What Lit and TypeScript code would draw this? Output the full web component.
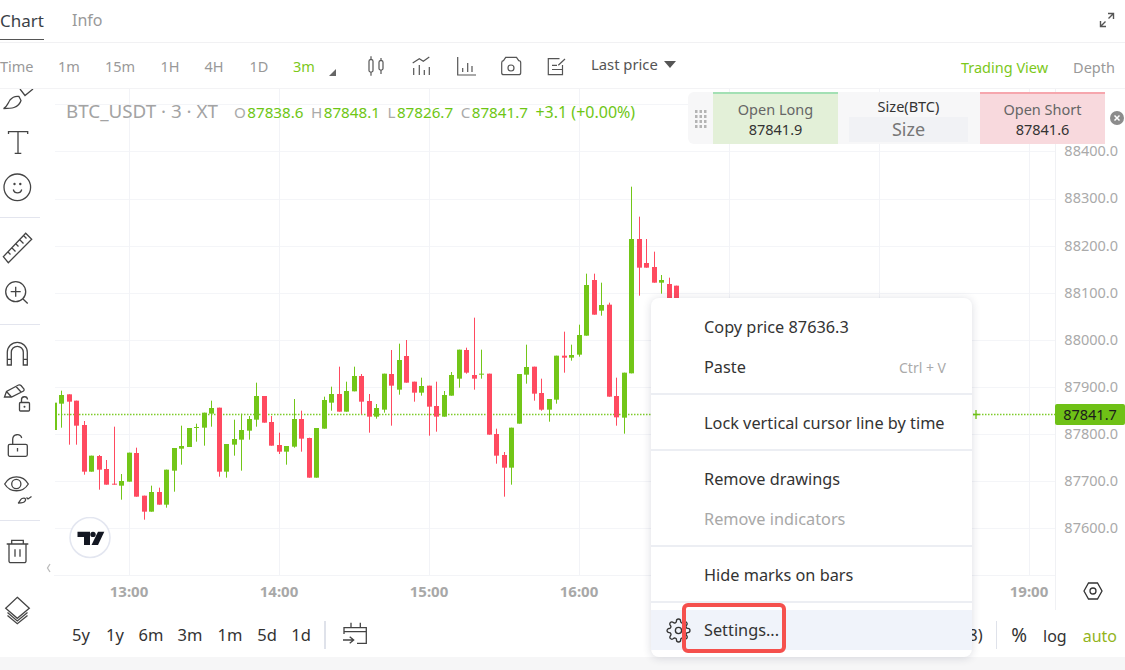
import { LitElement, html, css, svg } from 'lit';
import { customElement } from 'lit/decorators.js';

const RED = '#ff4a60';
const GREEN = '#72c618';

// [up, wickTop, bodyTop, bodyBottom, wickBottom], read off the chart in 3x crop units
const LEFT_CANDLES: number[][] = [
  [1, 188, 188, 270, 270], [1, 152, 165, 191, 263], [0, 163, 163, 185, 314], [0, 182, 182, 257, 314],
  [0, 243, 255, 395, 404], [1, 347, 347, 395, 395], [0, 345, 348, 389, 449], [0, 360, 387, 434, 434],
  [0, 260, 431, 434, 434], [1, 402, 423, 437, 479], [1, 338, 338, 425, 425], [0, 323, 339, 470, 470],
  [0, 467, 467, 515, 539], [1, 437, 456, 515, 515], [0, 443, 456, 494, 494], [1, 389, 389, 494, 503],
  [1, 324, 324, 392, 455], [1, 257, 318, 326, 374], [1, 264, 264, 321, 321], [1, 251, 261, 263, 305],
  [1, 218, 218, 263, 317], [1, 182, 204, 221, 260], [0, 203, 203, 395, 410], [1, 312, 312, 395, 413],
  [1, 239, 297, 314, 347], [1, 221, 270, 299, 392], [1, 228, 237, 272, 299], [1, 128, 168, 239, 260],
  [0, 168, 168, 248, 248], [0, 228, 246, 317, 317], [0, 278, 315, 335, 342], [1, 318, 318, 335, 374],
  [1, 177, 237, 320, 323], [0, 212, 237, 296, 335], [0, 293, 294, 413, 413], [1, 264, 264, 413, 413],
  [1, 170, 180, 266, 266], [1, 140, 162, 188, 212], [0, 80, 162, 215, 215],
];
const RIGHT_CANDLES: number[][] = [
  [1, 605, 633, 695, 695], [1, 560, 588, 634, 634], [0, 582, 588, 665, 703], [0, 642, 663, 710, 758],
  [1, 672, 684, 710, 716], [1, 581, 581, 689, 698], [0, 510, 582, 617, 737], [1, 491, 540, 629, 644],
  [0, 480, 528, 608, 608], [0, 605, 605, 638, 665], [1, 593, 618, 638, 647], [0, 617, 617, 680, 767],
  [0, 605, 678, 710, 755], [1, 633, 645, 710, 710], [1, 576, 585, 647, 647], [1, 509, 509, 596, 623],
  [0, 503, 510, 578, 581], [0, 413, 585, 596, 629], [1, 509, 581, 584, 596], [0, 581, 581, 764, 764],
  [0, 746, 762, 827, 851], [0, 816, 825, 863, 950], [1, 743, 743, 863, 914], [1, 582, 582, 731, 731],
  [1, 494, 561, 584, 611], [0, 560, 560, 641, 662], [0, 596, 639, 689, 692], [1, 657, 657, 689, 725],
  [1, 527, 527, 659, 671], [0, 455, 527, 533, 578], [1, 494, 525, 533, 542], [1, 434, 465, 524, 530],
  [1, 281, 315, 467, 467], [0, 281, 300, 404, 404], [1, 308, 375, 392, 407], [0, 368, 374, 650, 650],
  [0, 593, 648, 712, 737], [1, 578, 578, 713, 761], [1, 20, 177, 580, 580], [0, 110, 177, 263, 347],
  [0, 177, 249, 263, 263], [0, 215, 261, 308, 308], [1, 285, 300, 308, 341], [0, 293, 312, 380, 380],
  [0, 317, 317, 380, 380],
];

const candles = [
  ...LEFT_CANDLES.map((c) => c.map((v, i) => (i ? 340 + v / 3 : v))),
  ...RIGHT_CANDLES.map((c) => c.map((v, i) => (i ? 180 + v / 3 : v))),
];

const GRID_Y = [104, 151, 199, 246, 293, 340, 387, 434, 481, 528];
const GRID_X = [129, 279, 429, 579, 729, 879, 1029];
const PRICES = ['88400.0', '88300.0', '88200.0', '88100.0', '88000.0', '87900.0', '87800.0', '87700.0', '87600.0'];
const TIMES = ['13:00', '14:00', '15:00', '16:00', '', '', '19:00'];

const FRAMES = [
  { t: '1m', w: 48 }, { t: '15m', w: 54 }, { t: '1H', w: 46 }, { t: '4H', w: 42 }, { t: '1D', w: 48 },
];
const RANGES = [
  { t: '5y', w: 34 }, { t: '1y', w: 34 }, { t: '6m', w: 38 }, { t: '3m', w: 40 },
  { t: '1m', w: 40 }, { t: '5d', w: 34 }, { t: '1d', w: 34 },
];

// Left rail: each slot is drawn in page coordinates, top is the page y of the slot
const TOOLS = [
  { top: 89, h: 32, art: svg`<path d="M3.5 108.5C7 107 8 103 10 100 12.5 97 16 96 19 96.5L21 100.5C20 104 17 106.5 14 107.5 11 108.5 7 108.5 3.5 108.5Z"/><path d="M20 89 25 95.5 33 89"/>` },
  { top: 121, h: 44, art: svg`<path d="M8.5 134V131.7H27.7V134M18 131.7V153.3M14.7 153.3H21.3"/>` },
  { top: 165, h: 44, art: svg`<circle cx="17.3" cy="187.3" r="13.3"/><circle class="dot" cx="14.5" cy="184" r="1.2"/><circle class="dot" cx="20.3" cy="184" r="1.2"/><path d="M13.3 189.5C14.5 194 20.5 194 21.7 189.5"/>` },
  { top: 209, h: 16, sep: true },
  { top: 225, h: 44, art: svg`<path d="M3.3 256.7 8.3 262.7 31.7 239.3 25.7 233.3ZM8 252 10.5 254.5M12 248 15.5 251.5M16 244 18.5 246.5M20 240 23.5 243.5M24 236 26.5 238.5"/>` },
  { top: 269, h: 46, art: svg`<circle cx="15.7" cy="291.7" r="10"/><path d="M10.7 291.7H20.7M15.7 286.7V296.7M23 299 27.7 303.5"/>` },
  { top: 315, h: 18, sep: true },
  { top: 333, h: 42, art: svg`<path d="M7.3 365V352.3A10 10 0 0 1 27.3 352.3V365H23.3V352.3A6 6 0 0 0 11.3 352.3V365ZM7.3 359.3H11.3M23.3 359.3H27.3"/>` },
  { top: 375, h: 50, art: svg`<path d="M4.5 397 6.5 391.5 18.5 385Q20 384.5 21 385.5L24 389Q24.5 390 23.5 391L11.5 397ZM6.5 391.5 11.5 397M16 386.5 21.5 392.5"/><rect x="19.5" y="402.5" width="10" height="8.5" rx="1"/><path d="M21.5 402.5V400A3 3 0 0 1 27.5 399.5"/><circle class="dot" cx="24.5" cy="406.7" r="1"/>` },
  { top: 425, h: 40, art: svg`<rect x="8.3" y="444.3" width="19" height="12" rx="1.5"/><path d="M12.7 444.3V439A4.6 4.6 0 0 1 21.7 438"/><path d="M17.5 448V451.5"/>` },
  { top: 465, h: 44, art: svg`<path d="M4.7 484C10 474.5 23 474.5 28.3 484 23 493 10 493 4.7 484Z"/><circle cx="16.3" cy="484" r="4.6"/><path d="M18 503C19.5 502.5 20 499.5 22 498.5 23.5 498 25 498 25.5 499 26 500.5 24.5 502 23 502.5 21.5 503 19.5 503 18 503ZM26.5 497.5 28 499 31.5 496.5"/>` },
  { top: 509, h: 22, sep: true },
  { top: 531, h: 40, art: svg`<path d="M6.7 544H28.3M11.7 544V540.3H23.3V544M9 544V561A1.7 1.7 0 0 0 10.7 562.7H24.3A1.7 1.7 0 0 0 26 561V544M15 549.3V556.7M20 549.3V556.7"/>` },
  { top: 571, h: 78, art: svg`<path d="M17.3 597.3 29.3 608.3 17.3 618.3 5.7 608.3ZM7.5 612.5 17.3 621 27.5 612.5M7.5 615.5 17.3 623.7 27.5 615.5"/>` },
];

@customElement('app-root')
export class AppRoot extends LitElement {
  static styles = css`
    :host {
      display: block;
      width: 1125px;
      height: 670px;
      overflow: hidden;
      background: #fff;
      font-family: 'Noto Sans', 'Liberation Sans', sans-serif;
      color: #333;
    }

    svg {
      display: block;
    }

    .tabs {
      height: 43px;
      box-sizing: border-box;
      padding-bottom: 2px;
      display: flex;
      align-items: center;
      border-bottom: 1px solid #f1f1f3;
      font-size: 16px;
      color: #999;
    }

    .tab {
      margin-right: 28px;
    }

    .tab.active {
      color: #3a3f47;
      width: 44px;
      font-size: 17px;
      position: relative;
    }

    .tab.active::after {
      content: '';
      position: absolute;
      left: 0;
      right: 0;
      top: 30px;
      height: 1.5px;
      background: #555;
    }

    .expand {
      margin-left: auto;
      margin-right: 10px;
    }

    .toolbar {
      height: 46px;
      display: flex;
      align-items: center;
      border-bottom: 1px solid #f3f3f5;
      box-sizing: border-box;
      font-size: 14.5px;
      color: #999;
    }

    .time {
      width: 45px;
    }

    .frame {
      text-align: center;
    }

    .frame.on {
      width: 42px;
      color: #7cc81a;
    }

    .corner {
      width: 0;
      height: 0;
      margin: 13px 17px 0 4px;
      border-left: 7px solid transparent;
      border-bottom: 7px solid #666;
    }

    .ticon {
      width: 45px;
      height: 24px;
      display: flex;
      justify-content: center;
    }

    .ticon svg {
      fill: none;
      stroke: #555;
      stroke-width: 1.2;
    }

    .tool svg,
    .cal {
      fill: none;
      stroke: #444;
      stroke-width: 1.3;
    }

    .last {
      margin-left: 13px;
      color: #555;
      font-size: 14.8px;
      display: flex;
      align-items: center;
      gap: 6px;
      padding-bottom: 3px;
    }

    .caret {
      width: 0;
      height: 0;
      border-left: 6.5px solid transparent;
      border-right: 6.5px solid transparent;
      border-top: 7px solid #555;
    }

    .views {
      margin-left: auto;
      display: flex;
      gap: 25px;
      margin-right: 10px;
      padding-top: 3px;
    }

    .views .on {
      color: #7cc81a;
    }

    .main {
      position: relative;
      height: 568px;
      display: flex;
    }

    .rail {
      width: 55px;
      flex: none;
      position: relative;
    }

    .tool {
      width: 36px;
      overflow: hidden;
    }

    .tool .dot {
      fill: #444;
      stroke: none;
    }

    .rule {
      width: 40px;
      display: flex;
      align-items: center;
    }

    .rule i {
      display: block;
      width: 100%;
      height: 1px;
      background: #e3e5ee;
    }

    .fold {
      position: absolute;
      left: 46px;
      top: 474px;
      fill: none;
      stroke: #bbb;
      stroke-width: 1.3;
    }

    .logo {
      position: absolute;
      left: 14px;
      top: 428px;
    }

    .board {
      width: 1070px;
      flex: none;
    }

    .upper {
      display: flex;
      height: 521px;
    }

    .plot {
      width: 1000px;
      flex: none;
      position: relative;
    }

    .legend {
      position: absolute;
      left: 11px;
      top: 9px;
      display: flex;
      align-items: baseline;
      font-size: 15.2px;
      color: #aaa;
      white-space: nowrap;
    }

    .legend .name {
      font-size: 18.8px;
      color: #a3a3a3;
      margin-right: 16px;
    }

    .legend b {
      font-weight: 400;
      color: #6ec615;
      margin: 0 7.5px 0 1.5px;
    }

    .legend .chg {
      font-size: 16px;
      margin: 0;
    }

    .times {
      height: 35px;
      display: grid;
      grid-template-columns: repeat(7, 150px);
      margin-left: -1px;
      align-items: center;
      justify-items: center;
      border-top: 1px solid #f3f4f7;
      box-sizing: border-box;
      font-size: 15px;
      font-weight: 700;
      color: #a8a8a8;
      padding-bottom: 5px;
    }

    .prices {
      width: 70px;
      flex: none;
      box-sizing: border-box;
      border-left: 1px solid #f0f1f4;
      padding-top: 38.4px;
      display: flex;
      flex-direction: column;
      font-size: 14.5px;
      color: #aaa;
      position: relative;
    }

    .price {
      height: 47.1px;
      line-height: 47.1px;
      text-align: right;
      padding-right: 7px;
    }

    .hex {
      margin: auto 0 9px 27px;
      flex: none;
      fill: none;
      stroke: #333;
      stroke-width: 1.3;
    }

    .tag {
      position: absolute;
      left: -1px;
      right: 0;
      top: 315px;
      height: 21px;
      line-height: 21px;
      background: #6fc116;
      border-radius: 2px;
      text-align: center;
      font-size: 14.5px;
      color: #1c1c1c;
    }

    .bar {
      height: 47px;
      display: flex;
      align-items: center;
      padding: 2px 8px 0 9px;
      font-size: 16.5px;
      color: #333;
      box-sizing: border-box;
    }

    .range {
      text-align: center;
    }

    .divider {
      width: 1.5px;
      height: 28px;
      flex: none;
      background: #dfe2ea;
    }

    .divider.first {
      margin-left: 6px;
    }

    .cal {
      margin: -2px auto 0 16px;
    }

    .zone {
      margin-right: 13px;
    }

    .opts {
      display: flex;
      align-items: baseline;
      gap: 16px;
      margin-left: 14px;
      font-size: 16px;
    }

    .opts .pct {
      font-size: 19px;
    }

    .opts .on {
      color: #93b41c;
    }

    .order {
      position: absolute;
      left: 688px;
      top: 3px;
      height: 52px;
      width: 437px;
      display: flex;
    }

    .order .card {
      width: 417px;
      display: flex;
      background: #f7f7f8;
      border-radius: 6px 0 0 6px;
    }

    .grip {
      width: 25px;
      flex: none;
      fill: #b4b4b4;
      padding: 18px 0 0 7px;
      box-sizing: border-box;
    }

    .side {
      width: 125px;
      flex: none;
      box-sizing: border-box;
      border-top: 2px solid;
      text-align: center;
      font-size: 14.5px;
      line-height: 20px;
      padding-top: 5px;
      color: #666;
    }

    .side.long {
      background: #e3f0d8;
      border-color: #a3e0b4;
    }

    .side.short {
      background: #f8d9dd;
      border-color: #f6a6ad;
    }

    .side div {
      color: #333;
    }

    .size {
      width: 142px;
      flex: none;
      box-sizing: border-box;
      padding: 4px 12px 0 11px;
      text-align: center;
      font-size: 14.5px;
      line-height: 21px;
    }

    .size div {
      height: 25px;
      line-height: 25px;
      background: #f1f2f5;
      font-size: 18px;
      color: #777;
    }

    .close {
      position: absolute;
      left: 422px;
      top: 19px;
    }

    .menu {
      position: absolute;
      left: 651px;
      top: 209px;
      width: 321px;
      height: 359px;
      box-sizing: border-box;
      padding-top: 9px;
      background: #fff;
      border-radius: 8px;
      box-shadow: 0 1px 8px rgba(30, 40, 70, 0.16);
      font-size: 16.3px;
      color: #333;
    }

    .row {
      height: 40px;
      display: flex;
      align-items: center;
      justify-content: space-between;
      padding: 0 26px 0 53px;
      white-space: nowrap;
    }

    .row.off {
      color: #a8a8a8;
    }

    .row span {
      font-size: 14px;
      color: #aaa;
    }

    .gap {
      height: 2px;
      background: #eceef3;
      margin: 6px 0 8px;
    }

    .gap.tight {
      margin-bottom: 7px;
    }

    .row.hot {
      justify-content: flex-start;
      gap: 13px;
      padding-left: 15px;
      background: #f0f3fa;
    }

    .gear {
      fill: none;
      stroke: #333;
      stroke-width: 1.3;
    }

    .mark {
      position: absolute;
      left: 31px;
      top: 305px;
      width: 104px;
      height: 50px;
      box-sizing: border-box;
      border: 4px solid #f5504d;
      border-radius: 6px;
    }

    .strip {
      height: 13px;
      background: #f6f6f7;
    }
  `;

  private renderChart() {
    return html`<svg width="1000" height="486" viewBox="55 89 1000 486">
      ${GRID_Y.map((y) => svg`<rect x="55" y=${y} width="1000" height="1" fill="#f4f5f8"/>`)}
      ${GRID_X.map((x) => svg`<rect x=${x} y="89" width="1" height="486" fill="#f2f3f7"/>`)}
      <line x1="55" y1="414.5" x2="1055" y2="414.5" stroke="#7ecb2a" stroke-width="1.3" stroke-dasharray="1.5 1.5"/>
      ${candles.map((c, i) => {
        const left = Math.round(54.3 + 7.5 * i - 2.5);
        const fill = c[0] ? GREEN : RED;
        return svg`<rect x=${left + 2} y=${c[1]} width="1" height=${c[4] - c[1]} fill=${fill}/>
          <rect x=${left} y=${c[2]} width="5" height=${Math.max(c[3] - c[2], 1)} fill=${fill}/>`;
      })}
      <path d="M973 414.5H979.5M976 410V419" stroke="#70c516" stroke-width="1.3"/>
    </svg>`;
  }

  private renderRail() {
    return html`<div class="rail">
      ${TOOLS.map((t) =>
        t.sep
          ? html`<div class="rule" style="height:${t.h}px"><i></i></div>`
          : html`<div class="tool" style="height:${t.h}px">
              <svg width="36" height=${t.h} viewBox="0 ${t.top} 36 ${t.h}">${t.art}</svg>
            </div>`
      )}
      <svg class="fold" width="5" height="10" viewBox="0 0 5 10"><path d="M4 1 1.5 5 4 9"/></svg>
    </div>`;
  }

  private renderToolbar() {
    return html`<div class="toolbar">
      <div class="time">Time</div>
      ${FRAMES.map((f) => html`<div class="frame" style="width:${f.w}px">${f.t}</div>`)}
      <div class="frame on">3m</div>
      <div class="corner"></div>
      <div class="ticon">
        <svg width="24" height="24" viewBox="364 54 24 24">
          <path d="M371 56.3V59.7M371 72V75.7M381 58V60.7M381 70V74"/>
          <rect x="369" y="59.7" width="4" height="12.3" rx="1.5"/>
          <rect x="379" y="60.7" width="4" height="9.3" rx="1.5"/>
        </svg>
      </div>
      <div class="ticon">
        <svg width="24" height="24" viewBox="408 54 24 24">
          <path d="M411.7 63 418.3 58.7 422.3 61.3 428.3 57M412.7 68V75M418.3 65V75M423.3 70V75M428.3 67V75"/>
        </svg>
      </div>
      <div class="ticon">
        <svg width="24" height="24" viewBox="453 54 24 24">
          <path d="M456.7 57V75H475M461.7 68V72M466.7 63V72M471 66V72"/>
        </svg>
      </div>
      <div class="ticon">
        <svg width="24" height="24" viewBox="499 54 24 24">
          <path d="M503.5 60.7 505.7 57.3H516.5L518.7 60.7A2 2 0 0 1 520.7 62.7V72.7A2 2 0 0 1 518.7 74.7H503.7A2 2 0 0 1 501.7 72.7V62.7A2 2 0 0 1 503.5 60.7Z"/>
          <circle cx="511" cy="68" r="3"/>
        </svg>
      </div>
      <div class="ticon">
        <svg width="24" height="24" viewBox="544 54 24 24">
          <path d="M559.5 58.7H548.3V74.7H562.5V65M552 65.3H557M552 69.5H562M565 59 558.3 65.3"/>
        </svg>
      </div>
      <div class="last">Last price <span class="caret"></span></div>
      <div class="views"><span class="on">Trading View</span><span>Depth</span></div>
    </div>`;
  }

  private renderOrder() {
    return html`<div class="order">
      <div class="card">
        <div class="grip">
          <svg width="14" height="20" viewBox="0 0 14 20">
            ${[0, 4.5, 9].map((x) =>
              [0, 5, 10, 15].map((y) => svg`<rect x=${x} y=${y} width="2.5" height="3"/>`)
            )}
          </svg>
        </div>
        <div class="side long">Open Long<div>87841.9</div></div>
        <div class="size">Size(BTC)<div>Size</div></div>
        <div class="side short">Open Short<div>87841.6</div></div>
      </div>
      <svg class="close" width="14" height="14" viewBox="0 0 14 14">
        <circle cx="7" cy="7" r="7" fill="#8c8c8c"/>
        <path d="M4.5 4.5 9.5 9.5M9.5 4.5 4.5 9.5" stroke="#fff" stroke-width="1.5"/>
      </svg>
    </div>`;
  }

  private renderMenu() {
    return html`<div class="menu">
      <div class="row">Copy price 87636.3</div>
      <div class="row">Paste<span>Ctrl + V</span></div>
      <div class="gap"></div>
      <div class="row">Lock vertical cursor line by time</div>
      <div class="gap"></div>
      <div class="row">Remove drawings</div>
      <div class="row off">Remove indicators</div>
      <div class="gap"></div>
      <div class="row">Hide marks on bars</div>
      <div class="gap tight"></div>
      <div class="row hot">
        <svg class="gear" width="25" height="25" viewBox="0 0 24 24">
          <circle cx="12" cy="12" r="3"/>
          <path d="M19.4 15a1.65 1.65 0 0 0 .33 1.82l.06.06a2 2 0 0 1 0 2.83 2 2 0 0 1-2.83 0l-.06-.06a1.65 1.65 0 0 0-1.82-.33 1.65 1.65 0 0 0-1 1.51V21a2 2 0 0 1-2 2 2 2 0 0 1-2-2v-.09A1.65 1.65 0 0 0 9 19.4a1.65 1.65 0 0 0-1.82.33l-.06.06a2 2 0 0 1-2.83 0 2 2 0 0 1 0-2.83l.06-.06a1.65 1.65 0 0 0 .33-1.82 1.65 1.65 0 0 0-1.51-1H3a2 2 0 0 1-2-2 2 2 0 0 1 2-2h.09A1.65 1.65 0 0 0 4.6 9a1.65 1.65 0 0 0-.33-1.82l-.06-.06a2 2 0 0 1 0-2.83 2 2 0 0 1 2.83 0l.06.06a1.65 1.65 0 0 0 1.82.33H9a1.65 1.65 0 0 0 1-1.51V3a2 2 0 0 1 2-2 2 2 0 0 1 2 2v.09a1.65 1.65 0 0 0 1 1.51 1.65 1.65 0 0 0 1.82-.33l.06-.06a2 2 0 0 1 2.83 0 2 2 0 0 1 0 2.83l-.06.06a1.65 1.65 0 0 0-.33 1.82V9a1.65 1.65 0 0 0 1.51 1H21a2 2 0 0 1 2 2 2 2 0 0 1-2 2h-.09a1.65 1.65 0 0 0-1.51 1z"/>
        </svg>
        Settings...
      </div>
      <div class="mark"></div>
    </div>`;
  }

  render() {
    return html`
      <div class="tabs">
        <div class="tab active">Chart</div>
        <div class="tab">Info</div>
        <svg class="expand" width="16" height="16" viewBox="0 0 16 16" fill="none" stroke="#555" stroke-width="1.4">
          <path d="M9 1.5H14.5V7M14.5 1.5 9.5 6.5M7 14.5H1.5V9M1.5 14.5 6.5 9.5"/>
        </svg>
      </div>
      ${this.renderToolbar()}
      <div class="main">
        ${this.renderRail()}
        <div class="board">
          <div class="upper">
            <div class="plot">
              ${this.renderChart()}
              <div class="legend">
                <span class="name">BTC_USDT · 3 · XT</span>
                O<b>87838.6</b>H<b>87848.1</b>L<b>87826.7</b>C<b>87841.7</b><b class="chg">+3.1 (+0.00%)</b>
              </div>
              <svg class="logo" width="42" height="42" viewBox="69 517 42 42">
                <circle cx="90" cy="537.5" r="20" fill="#fff" stroke="#e3e6f0" stroke-width="1.5"/>
                <path d="M77.5 531.7H90V545H84V537H77.5Z" fill="#131722"/>
                <circle cx="93" cy="534.4" r="2.7" fill="#131722"/>
                <path d="M98 531.7H104.3L98 545H91.5Z" fill="#131722"/>
              </svg>
              <div class="times">${TIMES.map((t) => html`<span>${t}</span>`)}</div>
            </div>
            <div class="prices">
              ${PRICES.map((p) => html`<div class="price">${p}</div>`)}
              <div class="tag">87841.7</div>
              <svg class="hex" width="20" height="20" viewBox="0 0 20 20">
                <path d="M1 10 5.5 2H14.5L19 10 14.5 18H5.5Z"/><circle cx="10" cy="10" r="3"/>
              </svg>
            </div>
          </div>
          <div class="bar">
            ${RANGES.map((r) => html`<div class="range" style="width:${r.w}px">${r.t}</div>`)}
            <div class="divider first"></div>
            <svg class="cal" width="26" height="26" viewBox="340 620 26 26">
              <path d="M349 621.7V626.7M358.3 621.7V626.7M342 633V626.7H364.3V642.3H355M342 630.7H364.3M341 639H351.7M347.7 635.7 351.7 639 347.7 642.3"/>
            </svg>
            <span class="zone">(UTC+8)</span>
            <div class="divider"></div>
            <div class="opts"><span class="pct">%</span><span>log</span><span class="on">auto</span></div>
          </div>
        </div>
        ${this.renderOrder()} ${this.renderMenu()}
      </div>
      <div class="strip"></div>
    `;
  }
}
